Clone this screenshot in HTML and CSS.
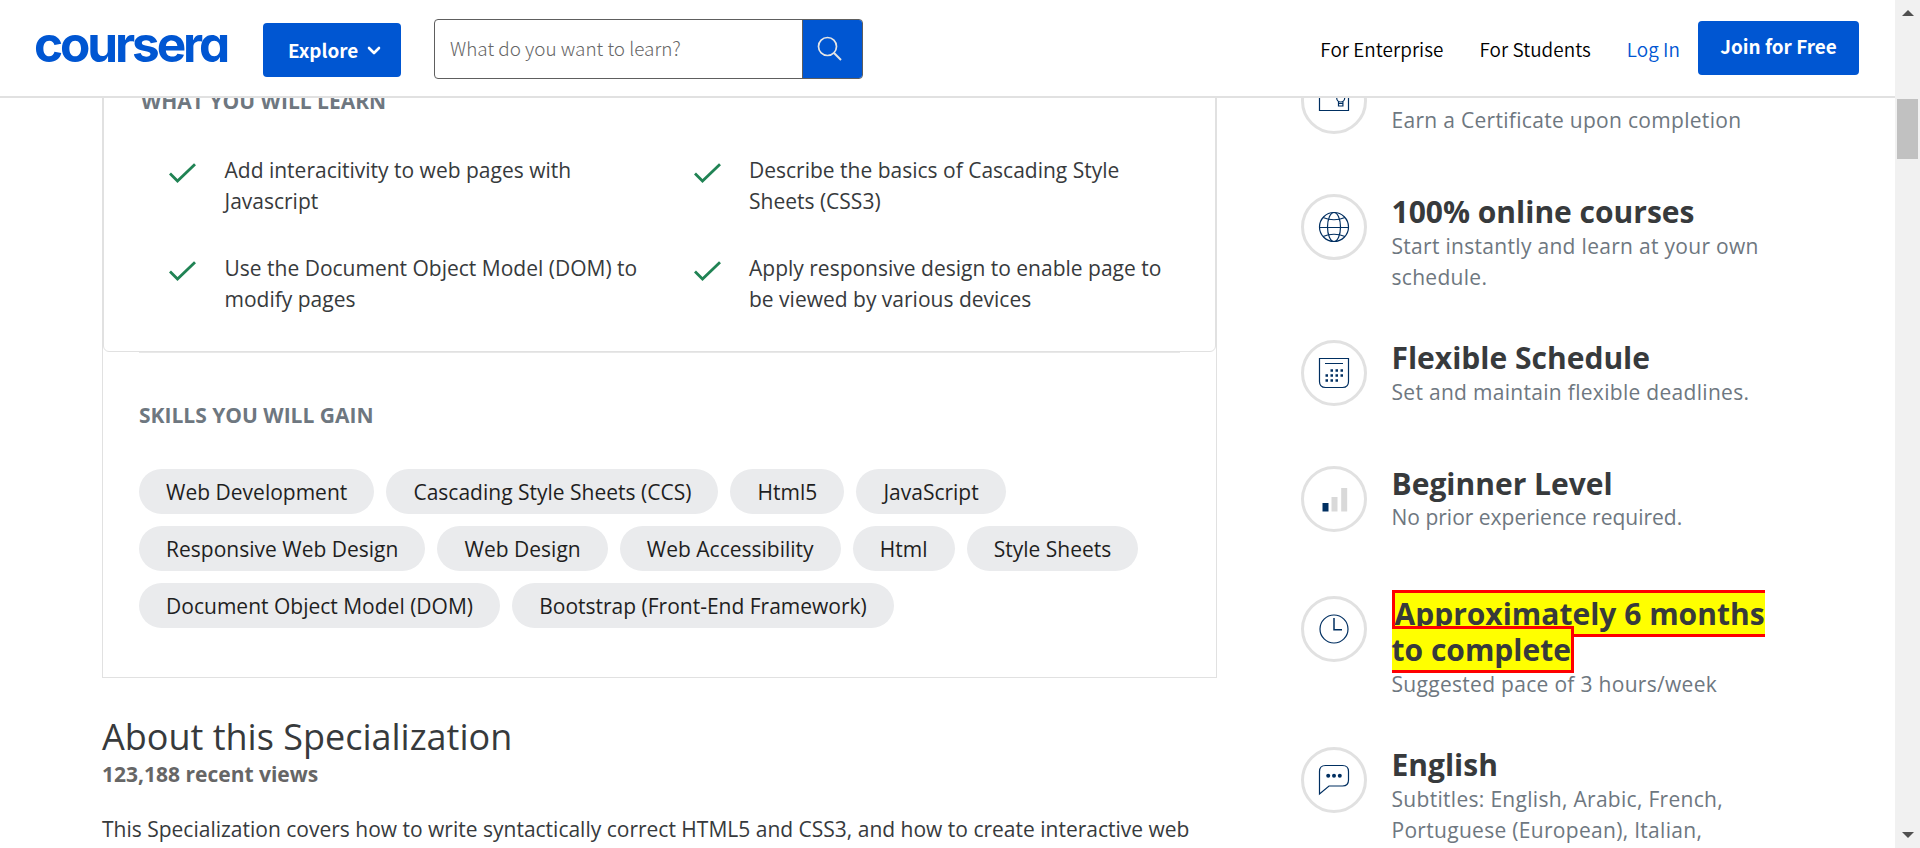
FILE: index.html
```html
<!DOCTYPE html>
<html lang="en">
<head>
<meta charset="utf-8">
<title>Coursera</title>
<link rel="stylesheet" href="styles.css">
</head>
<body>
<div class="page">
  <header class="header">
    <a class="logo">coursera</a>
    <button class="btn explore">Explore
      <svg width="14" height="10" viewBox="0 0 14 10"><path d="M2 2l5 5 5-5" fill="none" stroke="#fff" stroke-width="2.6" stroke-linecap="round" stroke-linejoin="round"/></svg>
    </button>
    <div class="search">
      <div class="search-field">What do you want to learn?</div>
      <div class="search-btn">
        <svg width="26" height="26" viewBox="0 0 26 26"><g fill="none" stroke="#e5e5e5" stroke-width="1.7"><circle cx="10.5" cy="10.5" r="9"/><path d="M16.8 16.8l7.2 7.2" stroke-width="2"/></g></svg>
      </div>
    </div>
    <nav class="nav">
      <a>For Enterprise</a>
      <a>For Students</a>
      <a class="login">Log In</a>
    </nav>
    <button class="btn join">Join for Free</button>
  </header>

  <main class="content">
    <section class="primary">
      <div class="card">
        <div class="learn">
          <h2 class="label">WHAT YOU WILL LEARN</h2>
          <ul class="goals">
            <li><svg class="tick" viewBox="0 0 27 20"><path d="M1 10.500l7.500 7.500L26 1.200"/></svg><p>Add interacitivity to web pages with Javascript</p></li>
            <li><svg class="tick" viewBox="0 0 27 20"><path d="M1 10.500l7.500 7.500L26 1.200"/></svg><p>Describe the basics of Cascading Style Sheets (CSS3)</p></li>
            <li><svg class="tick" viewBox="0 0 27 20"><path d="M1 10.500l7.500 7.500L26 1.200"/></svg><p>Use the Document Object Model (DOM) to modify pages</p></li>
            <li><svg class="tick" viewBox="0 0 27 20"><path d="M1 10.500l7.500 7.500L26 1.200"/></svg><p>Apply responsive design to enable page to be viewed by various devices</p></li>
          </ul>
        </div>
        <div class="skills">
          <h2 class="label">SKILLS YOU WILL GAIN</h2>
          <div class="chips">
            <span>Web Development</span><span>Cascading Style Sheets (CCS)</span><span>Html5</span><span>JavaScript</span><span>Responsive Web Design</span><span>Web Design</span><span>Web Accessibility</span><span>Html</span><span>Style Sheets</span><span>Document Object Model (DOM)</span><span>Bootstrap (Front-End Framework)</span>
          </div>
        </div>
      </div>
      <h1 class="about">About this Specialization</h1>
      <p class="views">123,188 recent views</p>
      <p class="intro">This Specialization covers how to write syntactically correct HTML5 and CSS3, and how to create interactive web</p>
    </section>

    <aside class="facts">
      <div class="fact certificate">
        <div class="badge"><svg viewBox="3 3 60 60"><path d="M18.500 20.500h29v22h-29z"/><circle cx="39.700" cy="30" r="4"/><path d="M37.500 33.500v4.500h4.400v-4.500M37.500 35.500h4.400"/></svg></div>
        <div><p>Earn a Certificate upon completion</p></div>
      </div>
      <div class="fact tall">
        <div class="badge"><svg viewBox="3 3 60 60"><circle cx="33" cy="33" r="14.500"/><ellipse cx="33" cy="33" rx="6.500" ry="14.500"/><path d="M18.500 33.500h29M22 23.500q11 4.500 22 0M22 42.500q11-4.500 22 0"/></svg></div>
        <div><h3>100% online courses</h3><p>Start instantly and learn at your own schedule.</p></div>
      </div>
      <div class="fact">
        <div class="badge"><svg viewBox="3 3 60 60"><path d="M18.500 18.500h29v23q0 6-6 6h-17q-6 0-6-6zM24 23.500h18"/><path class="dots" d="M29.500 30.500h2.500M34.500 30.500h2.500M39.500 30.500h2.500M24.500 35.500h2.500M29.500 35.500h2.500M34.500 35.500h2.500M39.500 35.500h2.500M24.500 40.500h2.500M29.500 40.500h2.500M34.500 40.500h2.500"/></svg></div>
        <div><h3>Flexible Schedule</h3><p>Set and maintain flexible deadlines.</p></div>
      </div>
      <div class="fact level">
        <div class="badge"><svg viewBox="3 3 60 60"><g stroke="none"><path fill="#002f61" d="M21.500 37h6v8.500h-6z"/><path fill="#d9d9d9" d="M30.500 31h6v14.500h-6zM40.200 22h6v23.500h-6z"/></g></svg></div>
        <div><h3>Beginner Level</h3><p>No prior experience required.</p></div>
      </div>
      <div class="fact duration">
        <div class="badge"><svg viewBox="3 3 60 60"><circle cx="33" cy="33" r="14"/><path d="M33 22v11.700h8" stroke-width="1.500"/></svg></div>
        <div><h3><span class="mark">Approximately 6 months to complete</span></h3><p>Suggested pace of 3 hours/week</p></div>
      </div>
      <div class="fact">
        <div class="badge"><svg viewBox="3 3 60 60"><path d="M18.500 47V24.500q0-6 6-6h17q6 0 6 6v8.500q0 6-6 6H28z"/><g fill="#002f61" stroke="none"><circle cx="27.200" cy="28.700" r="2"/><circle cx="33" cy="28.700" r="2"/><circle cx="38.800" cy="28.700" r="2"/></g></svg></div>
        <div><h3>English</h3><p>Subtitles: English, Arabic, French, Portuguese (European), Italian,</p></div>
      </div>
    </aside>
  </main>
</div>
<div class="scrollbar">
  <svg width="12" height="6" viewBox="0 0 12 6"><path d="M0 6l6-6 6 6z" fill="#505050"/></svg>
  <div class="thumb"></div>
  <svg width="12" height="6" viewBox="0 0 12 6"><path d="M0 0l6 6 6-6z" fill="#505050"/></svg>
</div>
</body>
</html>
```
FILE: styles.css
```css
* { box-sizing: border-box; margin: 0; padding: 0; }

body {
  display: flex;
  height: 848px;
  overflow: hidden;
  background: #fff;
  color: #373a3c;
  font: 400 21px/31px "Open Sans", sans-serif;
}

.page { width: 1895px; height: 848px; overflow: hidden; }

/* Header */
.header {
  display: flex;
  align-items: center;
  height: 98px;
  padding: 0 36px 0 34px;
  border-bottom: 2px solid #e1e1e1;
  font: 350 18.9px/27px "Noto Sans CJK SC", sans-serif;
}

.logo {
  width: 229px;
  color: #0056d2;
  font: 650 49.5px/60px Inter, sans-serif;
  font-feature-settings: "cv11";
  letter-spacing: -3.1px;
  margin-top: -8px;
}

.btn {
  height: 54px;
  border: 0;
  border-radius: 4px;
  background: #0056d2;
  color: #fff;
  font: 700 18.9px/27px "Noto Sans CJK SC", sans-serif;
}

.explore {
  display: flex;
  align-items: center;
  gap: 9px;
  width: 138px;
  padding: 0 0 2px 25px;
  margin: 4px 33px 0 0;
}

.explore svg { margin-top: 3px; }

.search {
  display: flex;
  width: 429px;
  height: 60px;
  margin-top: 2px;
  border: 1px solid #5e5e5e;
  border-radius: 4px;
  overflow: hidden;
}

.search-field {
  flex: 1;
  padding: 14px 0 0 15px;
  color: #666;
  font-weight: 300;
}

.search-btn {
  display: flex;
  align-items: center;
  width: 60px;
  padding-left: 14px;
  border-left: 1px solid #5e5e5e;
  background: #0056d2;
}

.nav {
  display: flex;
  gap: 36px;
  margin: 0 18px 0 auto;
  color: #000;
  letter-spacing: .05px;
}

.login { color: #0056d2; }
.join { width: 161px; padding-bottom: 5px; }

/* Page body */
.content {
  display: flex;
  height: 750px;
  overflow: hidden;
  padding-left: 102px;
}

.primary { width: 1115px; margin: -38px 84px 0 0; }

.card { height: 618px; border: 1px solid #e1e1e1; }

.learn {
  height: 291px;
  padding: 24px 0 0 37px;
  border: 1px solid #e1e1e1;
  border-radius: 6px;
}

.label {
  color: #6e7780;
  font-size: 21px;
  font-weight: 700;
  line-height: 31px;
}

.goals {
  display: grid;
  grid-template-columns: 524.5px 524.5px;
  row-gap: 36px;
  margin: 38px 0 0 28px;
  list-style: none;
}

.goals li { display: flex; gap: 28.5px; }
.goals p { width: 430px; }

.tick {
  width: 27px;
  height: 20px;
  margin-top: 8px;
  fill: none;
  stroke: #208354;
  stroke-width: 2.8;
}

.skills {
  margin: 0 36px;
  padding-top: 47px;
  border-top: 1px solid #e8e8e8;
}

.chips {
  display: flex;
  flex-wrap: wrap;
  gap: 12px;
  margin-top: 38px;
}

.chips span {
  height: 45px;
  padding: 8px 27.1px 6px;
  border-radius: 23px;
  background: #eaebed;
  color: #1f1f1f;
}

.about {
  margin-top: 36px;
  font-size: 36px;
  font-weight: 400;
  line-height: 45px;
}

.views { color: #666; font-weight: 700; }
.intro { margin-top: 24px; white-space: nowrap; }

/* Sidebar facts */
.facts { width: 480px; margin-top: -30px; }

.fact {
  display: flex;
  gap: 24.5px;
  height: 126px;
}

.fact.tall { height: 146px; }
.fact.level { height: 130px; }
.fact.duration { height: 151px; }
.fact > div:last-child { width: 378px; }

.fact h3 {
  font-size: 30px;
  font-weight: 700;
  line-height: 36px;
}

.fact p {
  margin-top: 1px;
  color: #6e7780;
  letter-spacing: .3px;
}

.fact.certificate p { margin-top: 37px; }
.fact.level p { margin-top: 0; letter-spacing: 0; }

.badge {
  flex: none;
  width: 66px;
  height: 66px;
  border: 3px solid #e1e1e1;
  border-radius: 50%;
}

.badge svg {
  display: block;
  width: 60px;
  height: 60px;
  fill: none;
  stroke: #002f61;
  stroke-width: 1.2;
}

.badge .dots { stroke-width: 2.4; }

.mark { border: 3px solid #f00; background: #ff0; }

/* Scrollbar */
.scrollbar {
  display: flex;
  flex-direction: column;
  align-items: center;
  width: 25px;
  height: 848px;
  padding: 10px 0;
  background: #f1f1f1;
}

.thumb {
  width: 21px;
  height: 60px;
  margin: 83px 0 auto;
  background: #c1c1c1;
}
```
